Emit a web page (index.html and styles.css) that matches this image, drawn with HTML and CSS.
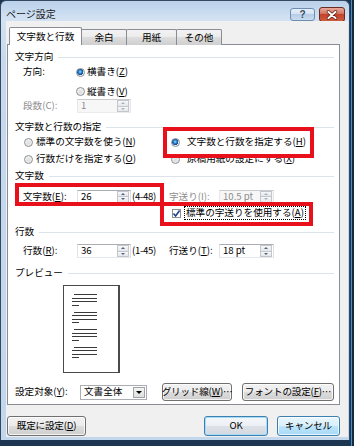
FILE: index.html
```html
<!DOCTYPE html>
<html lang="ja">
<head>
    <meta charset="UTF-8">
    <title>ページ設定</title>
    <link rel="stylesheet" href="styles.css">
</head>
<body>
<div class="window">
    <div class="titlebar">
        <span class="title">ページ設定</span>
        <div class="caption-buttons">
            <span class="cap-btn help">?</span>
            <span class="cap-btn close">
                <svg width="26" height="14" viewBox="0 0 26 14">
                    <path d="M9 3.5 L17 10.5 M17 3.5 L9 10.5" stroke="#5a1a12" stroke-width="3.6" stroke-linecap="round"/>
                    <path d="M9 3.5 L17 10.5 M17 3.5 L9 10.5" stroke="#fff" stroke-width="2" stroke-linecap="round"/>
                </svg>
            </span>
        </div>
    </div>

    <div class="client">
        <div class="tabs">
            <div class="tab active">文字数と行数</div>
            <div class="tab tab-margin">余白</div>
            <div class="tab tab-paper">用紙</div>
            <div class="tab tab-other">その他</div>
        </div>

        <div class="panel">
            <div class="group-title">文字方向</div>
            <div class="row dir-row">
                <span class="field-label">方向:</span>
                <span class="radio on"></span>
                <span>横書き(<u>Z</u>)</span>
            </div>
            <div class="row vert-row">
                <span class="radio"></span>
                <span>縦書き(<u>V</u>)</span>
            </div>
            <div class="row cols-row">
                <span class="field-label disabled">段数(C):</span>
                <div class="spin spin-cols disabled">
                    <span class="spin-value">1</span>
                    <span class="spin-buttons"><i class="up"></i><i class="down"></i></span>
                </div>
            </div>

            <div class="group-title grid-title">文字数と行数の指定</div>
            <div class="row option-row">
                <div class="col-a">
                    <span class="radio"></span>
                    <span>標準の文字数を使う(<u>N</u>)</span>
                </div>
                <span class="radio on"></span>
                <span class="col-b-text">文字数と行数を指定する(<u>H</u>)</span>
            </div>
            <div class="row option-row second">
                <div class="col-a">
                    <span class="radio"></span>
                    <span>行数だけを指定する(<u>O</u>)</span>
                </div>
                <span class="radio"></span>
                <span class="col-b-text">原稿用紙の設定にする(<u>X</u>)</span>
            </div>

            <div class="group-title chars-title">文字数</div>
            <div class="row num-row chars-row">
                <span class="field-label">文字数(<u>E</u>):</span>
                <div class="spin spin-main">
                    <span class="spin-value">26</span>
                    <span class="spin-buttons"><i class="up"></i><i class="down"></i></span>
                </div>
                <span class="range">(4-48)</span>
                <span class="field-label-2 disabled">字送り(I):</span>
                <div class="spin spin-pitch disabled">
                    <span class="spin-value">10.5 pt</span>
                    <span class="spin-buttons"><i class="up"></i><i class="down"></i></span>
                </div>
            </div>
            <div class="row check-row">
                <span class="checkbox">
                    <svg width="9" height="9" viewBox="0 0 9 9">
                        <path d="M1.5 4.5 L3.6 7 L7.6 1.5" fill="none" stroke="#1f3f8f" stroke-width="1.6"/>
                    </svg>
                </span>
                <span class="focus-text">標準の字送りを使用する(<u>A</u>)</span>
            </div>

            <div class="group-title lines-title">行数</div>
            <div class="row num-row lines-row">
                <span class="field-label">行数(<u>R</u>):</span>
                <div class="spin spin-main">
                    <span class="spin-value">36</span>
                    <span class="spin-buttons"><i class="up"></i><i class="down"></i></span>
                </div>
                <span class="range">(1-45)</span>
                <span class="field-label-2">行送り(<u>T</u>):</span>
                <div class="spin spin-pitch">
                    <span class="spin-value">18 pt</span>
                    <span class="spin-buttons"><i class="up"></i><i class="down"></i></span>
                </div>
            </div>

            <div class="group-title preview-title">プレビュー</div>
            <div class="preview-page">
                <div class="para"><i class="first"></i><i></i><i></i><i class="last"></i></div>
                <div class="para"><i class="first"></i><i></i><i></i><i class="last"></i></div>
                <div class="para"><i class="first"></i><i></i><i></i><i class="last"></i></div>
                <div class="para"><i class="first"></i><i></i><i></i><i class="last"></i></div>
            </div>

            <div class="row apply-row">
                <span class="apply-label">設定対象(<u>Y</u>):</span>
                <div class="combo">
                    <span class="combo-value">文書全体</span>
                    <span class="combo-btn"><i></i></span>
                </div>
                <span class="btn btn-grid">グリッド線(<u>W</u>)…</span>
                <span class="btn btn-font">フォントの設定(<u>F</u>)…</span>
            </div>

            <div class="mark mark-1"></div>
            <div class="mark mark-2"></div>
            <div class="mark mark-3"></div>
        </div>

        <div class="footer">
            <span class="btn btn-reset">既定に設定(<u>D</u>)</span>
            <span class="btn btn-ok">OK</span>
            <span class="btn btn-cancel">キャンセル</span>
        </div>
    </div>
</div>
</body>
</html>
```

FILE: styles.css
```css
* {
    box-sizing: border-box;
}

body {
    margin: 0;
    width: 354px;
    height: 446px;
    overflow: hidden;
    background: linear-gradient(90deg, #1c3550 0, #1c3550 351px, #4a8cc4 351px, #4a8cc4 352px, #142a40 352px);
    font-family: "Noto Sans CJK JP", "Noto Sans", sans-serif;
    font-size: 9.6px;
    line-height: 1;
    color: #000;
    white-space: nowrap;
}

u {
    text-decoration: underline;
    text-underline-offset: 1px;
}

i {
    font-style: normal;
}

/* window frame */
.window {
    width: 350px;
    height: 440px;
    border: 1px solid #34495f;
    border-bottom: none;
    border-radius: 6px 6px 0 0;
    background: linear-gradient(#b9d1ea, #d3e2f3 18px, #c6d9ee 60px, #c2d6ec);
    padding: 0 1px 3px 5px;
    display: flex;
    flex-direction: column;
}

.titlebar {
    height: 20px;
    display: flex;
    align-items: flex-start;
}

.title {
    margin-top: 8px;
    font-size: 10px;
    color: #1a1a1a;
}

.caption-buttons {
    margin-left: auto;
    margin-top: 6px;
    margin-right: 3px;
    display: flex;
    align-items: flex-start;
    gap: 4px;
}

.cap-btn {
    display: flex;
    align-items: center;
    justify-content: center;
    border-radius: 3px;
}

.help {
    width: 25px;
    height: 13px;
    margin-top: 1px;
    border: 1px solid #6f8db1;
    background: linear-gradient(#e6eff9, #d2e1f1 50%, #b8cde6 50%, #c9dcf0);
    color: #3a4e66;
    font-family: "Liberation Sans", sans-serif;
    font-weight: bold;
    font-size: 10px;
}

.close {
    width: 26px;
    height: 15px;
    border: 1px solid #6b2a22;
    background: linear-gradient(#e9a99b, #d2735f 45%, #c2422a 50%, #cf5d3e);
}

/* client area */
.client {
    flex: 1;
    background: #f0f0f0;
    padding: 6px 8px 1px 1px;
    display: flex;
    flex-direction: column;
}

.tabs {
    height: 18px;
    margin-bottom: -1px;
    padding-left: 2px;
    display: flex;
    align-items: flex-start;
    position: relative;
    z-index: 1;
}

.tab {
    height: 16px;
    margin-top: 2px;
    margin-left: -1px;
    border: 1px solid #898c95;
    border-bottom: none;
    border-radius: 2px 2px 0 0;
    background: linear-gradient(#f3f3f3, #ebebeb 50%, #dddddd 50%, #cfcfcf);
    display: flex;
    align-items: center;
    justify-content: center;
}

.tab.active {
    height: 18px;
    margin-top: 0;
    margin-left: 0;
    width: 73px;
    background: #fff;
    position: relative;
    z-index: 2;
}

.tab-margin {
    width: 46px;
}

.tab-paper {
    width: 51px;
}

.tab-other {
    width: 46px;
}

.panel {
    position: relative;
    background: #fff;
    border: 1px solid #898c95;
    padding: 5px 5px 3px 7px;
}

.group-title {
    height: 14px;
    display: flex;
    align-items: center;
}

.group-title::after {
    content: "";
    flex: 1;
    height: 1px;
    margin-left: 5px;
    background: #dde3ea;
}

.grid-title {
    margin-top: 7px;
}

.chars-title {
    margin-top: 3px;
}

.lines-title {
    margin-top: 5px;
}

.preview-title {
    margin-top: 8px;
}

.row {
    display: flex;
    align-items: center;
    height: 14px;
}

.disabled {
    color: #8d8d8d;
}

.field-label {
    padding-left: 8px;
    width: 62px;
}

.dir-row {
    height: 16px;
}

.dir-row .field-label {
    width: 61px;
}

.vert-row {
    height: 15px;
    margin-top: 4px;
    padding-left: 61px;
}

/* radio / checkbox */
.radio {
    width: 9px;
    height: 9px;
    margin-right: 2px;
    border-radius: 50%;
    border: 1px solid #8b8f94;
    background: radial-gradient(circle at 50% 60%, #dadcde 0, #f4f4f4 75%);
    flex-shrink: 0;
}

.radio.on {
    background: radial-gradient(circle at 45% 40%, #9fe0ff 0, #2b86d4 1.6px, #0f4a8a 3px, #eef0f2 3.4px);
}

.option-row {
    margin-top: 1px;
}

.option-row.second {
    margin-top: 3px;
}

.col-a {
    width: 156px;
    padding-left: 9px;
    display: flex;
    align-items: center;
}

.col-a .radio {
    margin-right: 3px;
}

.col-b-text {
    margin-left: 5px;
}

.checkbox {
    width: 9px;
    height: 9px;
    border: 1px solid #8e8f8f;
    background: #fff;
    display: flex;
}

.checkbox svg {
    margin: -1px;
}

.check-row {
    margin-top: 2px;
    padding-left: 157px;
}

.focus-text {
    margin-left: 3px;
    padding: 1px 1px;
    border: 1px dotted #000;
}

/* number fields */
.num-row {
    height: 14px;
}

.chars-row {
    margin-top: 6px;
    height: 15px;
}

.lines-row {
    margin-top: 5px;
}

.spin {
    height: 14px;
    border: 1px solid #abadb3;
    border-color: #abadb3 #dbdfe6 #e3e9ef #e2e3ea;
    background: #fff;
    display: flex;
}

.spin.disabled {
    background: #f7f7f7;
    border-color: #c9cbcf #e3e6ea #e9ecef #e6e7ec;
}

.spin-cols {
    width: 54px;
}

.spin-main {
    width: 54px;
}

.spin-pitch {
    width: 55px;
}

.spin-value {
    flex: 1;
    padding-left: 3px;
    display: flex;
    align-items: center;
}

.spin-buttons {
    width: 12px;
    margin: 0 1px 0 0;
    display: flex;
    flex-direction: column;
}

.spin-buttons i {
    flex: 1;
    border: 1px solid #c3c6cc;
    background: linear-gradient(#f8f8f8, #e4e6e9);
    display: flex;
    align-items: center;
    justify-content: center;
}

.spin-buttons i + i {
    border-top: none;
}

.spin-buttons .up::before,
.spin-buttons .down::before {
    content: "";
    border-left: 2.5px solid transparent;
    border-right: 2.5px solid transparent;
}

.spin-buttons .up::before {
    border-bottom: 2.5px solid #4b6485;
}

.spin-buttons .down::before {
    border-top: 2.5px solid #4b6485;
}

.disabled .spin-buttons .up::before {
    border-bottom-color: #a8b3c0;
}

.disabled .spin-buttons .down::before {
    border-top-color: #a8b3c0;
}

.range {
    width: 37px;
    margin-left: 1px;
    letter-spacing: -0.3px;
}

.field-label-2 {
    width: 50px;
}

/* preview */
.preview-page {
    width: 57px;
    height: 88px;
    margin-top: 5px;
    margin-left: 48px;
    border: 1px solid #4a4a4a;
    border-right-width: 2px;
    background: #fff;
    padding: 8px 0 0 8px;
}

.para {
    margin-bottom: 6px;
}

.para i {
    display: block;
    width: 25px;
    height: 1px;
    margin-bottom: 2.5px;
    background: #3a3a3a;
}

.para i.first {
    width: 23px;
    margin-left: 2px;
}

.para i.last {
    width: 7px;
    margin-bottom: 0;
}

/* bottom of panel */
.apply-row {
    height: 18px;
    margin-top: 10px;
}

.apply-label {
    width: 65px;
}

.combo {
    width: 67px;
    height: 15px;
    border: 1px solid #abadb3;
    background: #fff;
    display: flex;
}

.combo-value {
    flex: 1;
    padding-left: 3px;
    display: flex;
    align-items: center;
}

.combo-btn {
    width: 12px;
    margin: 1px;
    border: 1px solid #a0a4aa;
    background: linear-gradient(#f4f4f4, #dedede);
    display: flex;
    align-items: center;
    justify-content: center;
}

.combo-btn i {
    border-left: 3px solid transparent;
    border-right: 3px solid transparent;
    border-top: 3px solid #000;
}

.btn {
    height: 18px;
    border: 1px solid #707070;
    border-radius: 3px;
    background: linear-gradient(#f2f2f2, #ebebeb 50%, #dddddd 50%, #cfcfcf);
    box-shadow: inset 0 0 0 1px rgba(255, 255, 255, .75);
    display: flex;
    align-items: center;
    justify-content: center;
    letter-spacing: -0.2px;
}

.btn-grid {
    width: 70px;
    margin-left: 15px;
}

.btn-font {
    width: 92px;
    margin-left: 10px;
}

/* dialog buttons */
.footer {
    margin-top: 11px;
    display: flex;
    gap: 9px;
}

.footer .btn {
    height: 20px;
}

.btn-reset {
    width: 79px;
    margin-right: auto;
}

.btn-ok {
    width: 64px;
    border-color: #3c7fb1;
    background: linear-gradient(#f4f7fa, #eceff3 50%, #dde2e8 50%, #d3d9e0);
    box-shadow: inset 0 0 0 1px #a7dcf8;
}

.btn-cancel {
    width: 63px;
    border-color: #3c7fb1;
    background: linear-gradient(#eaf6fd, #d9f0fc 50%, #bee6fd 50%, #a7d9f5);
}

/* red highlight frames drawn over the dialog */
.mark {
    position: absolute;
    border: 4px solid #e8101a;
}

.mark-1 {
    left: 155px;
    top: 82px;
    width: 151px;
    height: 31px;
}

.mark-2 {
    left: 7px;
    top: 138px;
    width: 149px;
    height: 23px;
}

.mark-3 {
    left: 152px;
    top: 157px;
    width: 153px;
    height: 24px;
}
```
